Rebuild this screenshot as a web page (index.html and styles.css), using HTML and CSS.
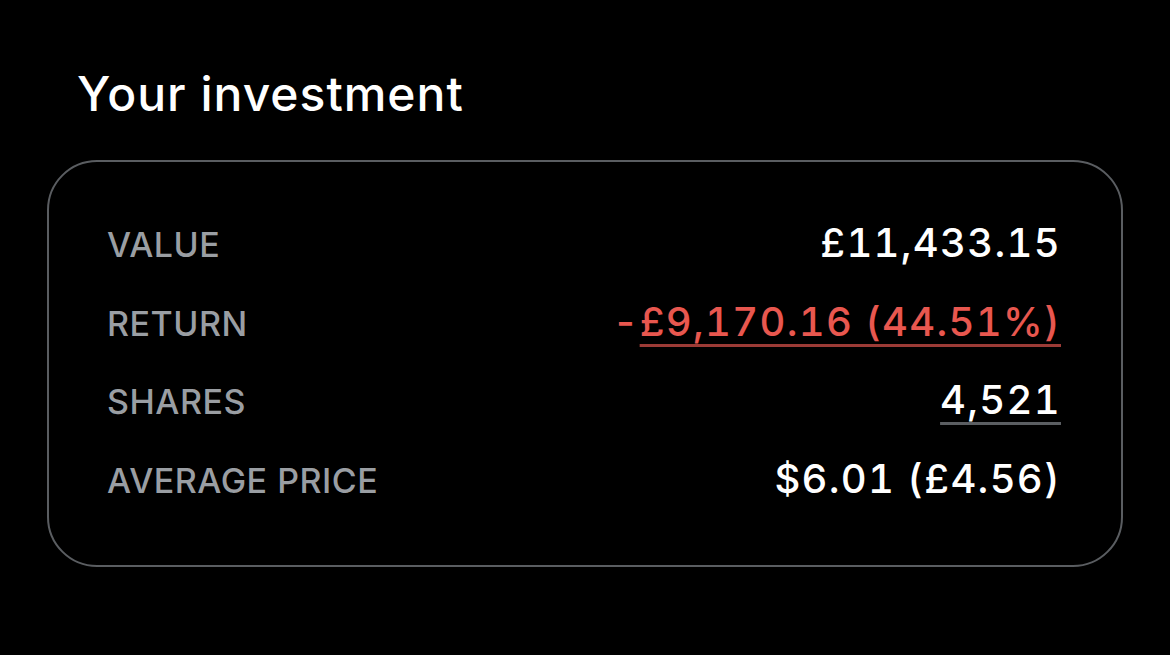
FILE: index.html
```html
<!DOCTYPE html>
<html lang="en">
<head>
  <meta charset="UTF-8" />
  <title>Your investment</title>
  <link rel="stylesheet" href="styles.css">
</head>
<body>
  <main class="page">
    <h1 class="title">Your investment</h1>

    <section class="card">
      <div class="row">
        <span class="label">VALUE</span>
        <span class="value">£11,433.15</span>
      </div>
      <div class="row">
        <span class="label">RETURN</span>
        <span class="value negative">-<span class="link-red">£9,170.16 (44.51%)</span></span>
      </div>
      <div class="row">
        <span class="label">SHARES</span>
        <span class="value"><span class="link-grey">4,521</span></span>
      </div>
      <div class="row">
        <span class="label">AVERAGE PRICE</span>
        <span class="value">$6.01 (£4.56)</span>
      </div>
    </section>
  </main>
</body>
</html>
```

FILE: styles.css
```css
body {
  margin: 0;
  background: #000;
  color: #fff;
  font-family: Inter, 'Noto Sans', sans-serif;
}

.page {
  padding: 62px 47px 0;
}

.title {
  margin: 0 0 34px 30px;
  font-size: 48px;
  font-weight: 500;
  line-height: 64px;
  letter-spacing: 1px;
}

.card {
  border: 2px solid #5a5d61;
  border-radius: 50px;
  padding: 42px 60px 47px 58px;
}

.row {
  display: flex;
  justify-content: space-between;
  align-items: baseline;
  height: 78.5px;
  line-height: 78.5px;
}

.label {
  color: #9a9ea3;
  font-size: 34px;
  font-weight: 500;
  letter-spacing: 0.5px;
}

.value {
  font-size: 40px;
  font-weight: 500;
  letter-spacing: 1.3px;
  font-variant-numeric: tabular-nums;
}

.negative {
  color: #e8574f;
}

.link-red {
  text-decoration: underline;
  text-decoration-color: #9c3b36;
  text-decoration-thickness: 3px;
  text-underline-offset: 8px;
}

.link-grey {
  text-decoration: underline;
  text-decoration-color: #5b5e62;
  text-decoration-thickness: 3px;
  text-underline-offset: 8px;
}
```
